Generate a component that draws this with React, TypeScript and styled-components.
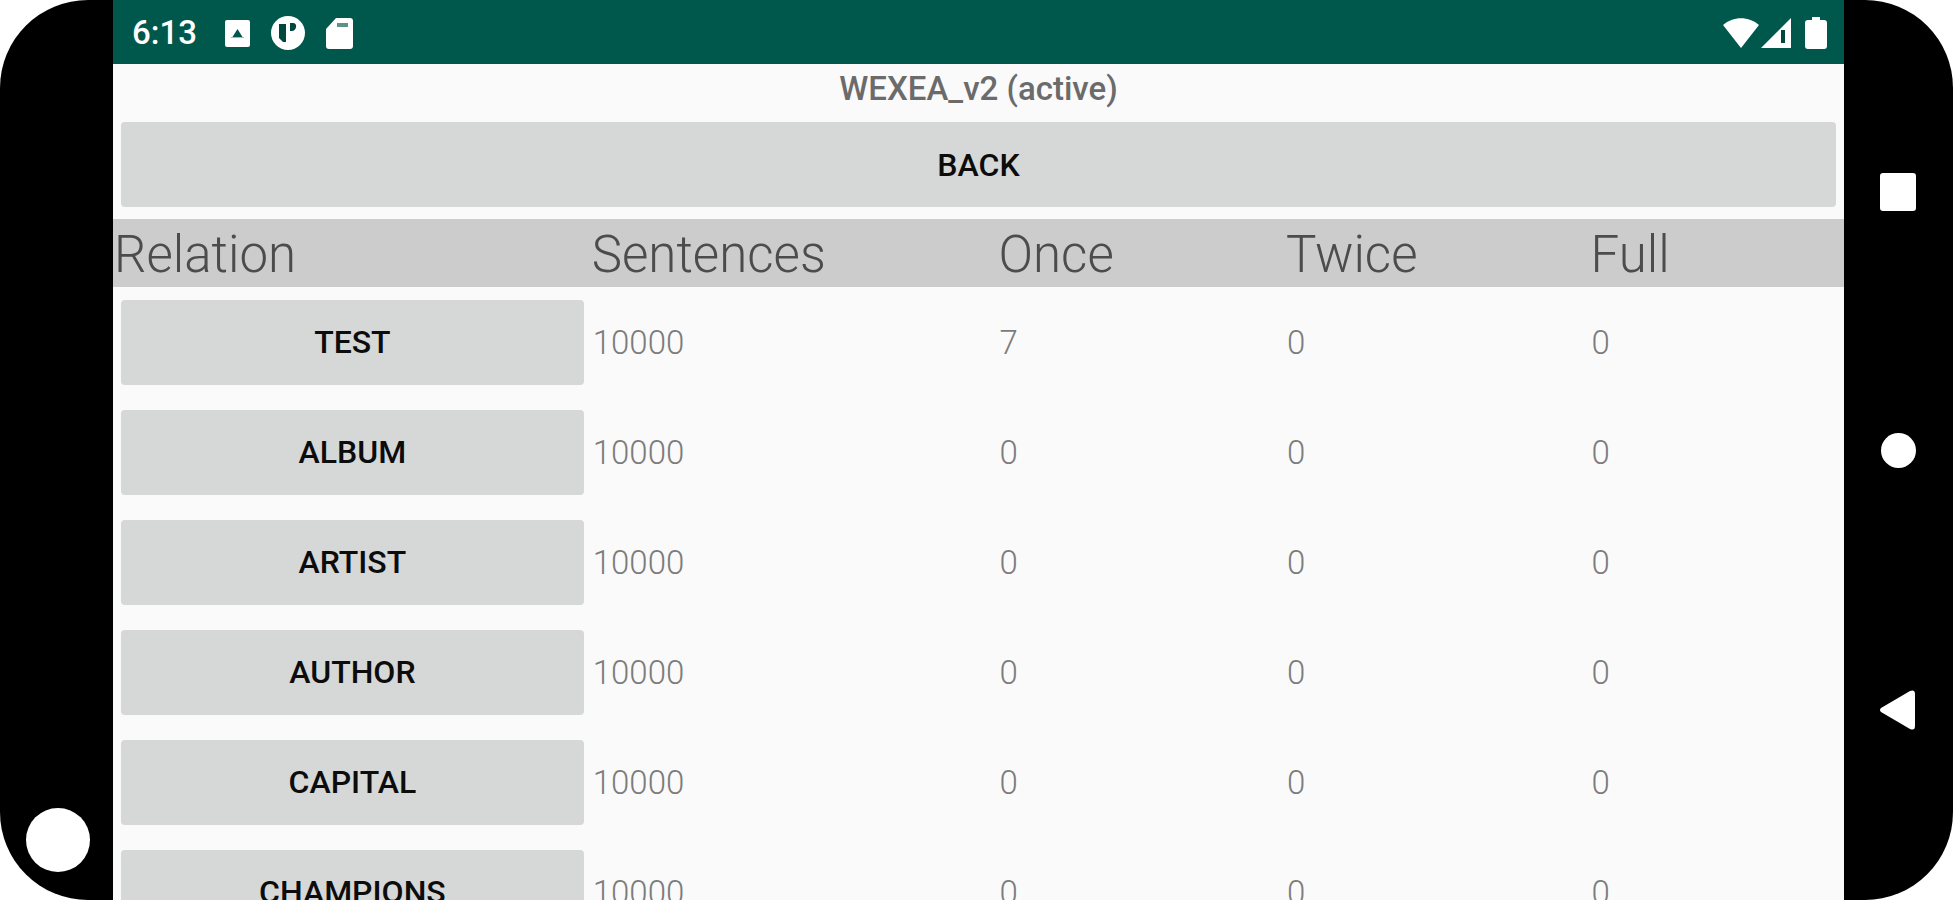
import React from "react";
import styled, { createGlobalStyle } from "styled-components";

const GlobalStyle = createGlobalStyle`
  *, *::before, *::after { box-sizing: border-box; }
  body {
    margin: 0;
    background: #ffffff;
    font-family: Roboto, "Liberation Sans", sans-serif;
  }
`;

const Device = styled.div`
  display: flex;
  height: 100vh;
  overflow: hidden;
  background: #000000;
  border-radius: 88px;
`;

const CameraBezel = styled.div`
  flex: 0 0 113px;
  display: flex;
  flex-direction: column;
  justify-content: flex-end;
  align-items: center;
  padding: 0 0 28px 3px;
`;

const Camera = styled.div`
  width: 64px;
  height: 64px;
  border-radius: 50%;
  background: #ffffff;
`;

const NavBezel = styled.nav`
  flex: 0 0 109px;
  display: flex;
  flex-direction: column;
  padding: 62px 1px 60px 0;
`;

const NavButton = styled.button`
  flex: 1;
  display: flex;
  align-items: center;
  justify-content: center;
  padding: 0;
  border: 0;
  background: transparent;
  color: #ffffff;
  cursor: pointer;
`;

const Screen = styled.div`
  flex: 1;
  min-width: 0;
  display: flex;
  flex-direction: column;
  overflow: hidden;
  background: #fafafa;
`;

const StatusBar = styled.header`
  flex: none;
  display: flex;
  align-items: center;
  justify-content: space-between;
  height: 64px;
  padding: 2px 17px 0 19px;
  background: #00574b;
  color: #ffffff;
`;

const StatusGroup = styled.div<{ $gap: number }>`
  display: flex;
  align-items: center;
  gap: ${(p) => p.$gap}px;
`;

const Clock = styled.time`
  margin-right: 7px;
  font-size: 33px;
  font-weight: 500;
  line-height: 40px;
`;

const Title = styled.h1`
  flex: none;
  margin: 0;
  padding: 5px 0;
  color: #6b6b6b;
  font-size: 33px;
  font-weight: 500;
  line-height: 40px;
  text-align: center;
`;

const BackArea = styled.div`
  flex: none;
  padding: 8px 8px 12px;
`;

const Button = styled.button`
  display: block;
  width: 100%;
  height: 85px;
  padding: 0;
  border: 0;
  border-radius: 4px;
  background: #d6d8d7;
  color: #0c0c0c;
  font-family: inherit;
  font-size: 32px;
  font-weight: 500;
  line-height: 40px;
  text-transform: uppercase;
  cursor: pointer;
`;

const RelationTable = styled.table`
  width: 100%;
  table-layout: fixed;
  border-collapse: collapse;
`;

const Column = styled.col<{ $width: string }>`
  width: ${(p) => p.$width};
`;

const HeadCell = styled.th`
  height: 68px;
  padding: 4px 0 0 1px;
  background: #cccccc;
  color: #4c4c4c;
  font-size: 51px;
  font-weight: 300;
  line-height: 60px;
  text-align: left;
`;

const NameCell = styled.td`
  height: 110px;
  padding: 0 7px 0 8px;
`;

const CountCell = styled.td`
  padding: 2px 0 0 2px;
  color: #7c7c7c;
  font-size: 33px;
  font-weight: 300;
  line-height: 40px;
`;

const relations = [
  { name: "Test", sentences: 10000, once: 7, twice: 0, full: 0 },
  { name: "Album", sentences: 10000, once: 0, twice: 0, full: 0 },
  { name: "Artist", sentences: 10000, once: 0, twice: 0, full: 0 },
  { name: "Author", sentences: 10000, once: 0, twice: 0, full: 0 },
  { name: "Capital", sentences: 10000, once: 0, twice: 0, full: 0 },
  { name: "Champions", sentences: 10000, once: 0, twice: 0, full: 0 },
];

const KeyboardIcon = () => (
  <svg width="25" height="27" viewBox="0 0 25 27" aria-hidden="true">
    <path
      fill="currentColor"
      fillRule="evenodd"
      d="M2 0h21a2 2 0 0 1 2 2v23a2 2 0 0 1-2 2H2a2 2 0 0 1-2-2V2a2 2 0 0 1 2-2Zm10.500 9-5 8h10Z"
    />
    <path fill="#9dbfba" d="M6 17h13v1H6Z" />
  </svg>
);

const AppIcon = () => (
  <svg width="34" height="34" viewBox="0 0 34 34" aria-hidden="true">
    <circle cx="17" cy="17" r="17" fill="currentColor" />
    <path fill="#00473d" d="M8 8h7v18h-3l-4-4ZM19 7h3a3 3 0 0 1 3 4c0 2-2 4-4 4h-2Z" />
  </svg>
);

const CardIcon = () => (
  <svg width="27" height="32" viewBox="0 0 27 32" aria-hidden="true">
    <path
      fill="currentColor"
      d="M10 1h14a3 3 0 0 1 3 3v25a3 3 0 0 1-3 3H3a3 3 0 0 1-3-3V12Z"
    />
    <path fill="#5d9189" d="M11 6h11v4H11Z" />
  </svg>
);

const WifiIcon = () => (
  <svg width="36" height="32" viewBox="0 0 36 32" aria-hidden="true">
    <path fill="currentColor" d="M0 8C10-1 26-1 36 8L18 31Z" />
  </svg>
);

const SignalIcon = () => (
  <svg width="30" height="30" viewBox="0 0 30 30" aria-hidden="true">
    <path fill="currentColor" d="M30 0v30H0Z" />
    <path fill="#00473d" d="M20 12h4v13h-4Z" />
  </svg>
);

const BatteryIcon = () => (
  <svg width="22" height="32" viewBox="0 0 22 32" aria-hidden="true">
    <path
      fill="currentColor"
      d="M7 0h8v3h4a3 3 0 0 1 3 3v23a3 3 0 0 1-3 3H3a3 3 0 0 1-3-3V6a3 3 0 0 1 3-3h4Z"
    />
  </svg>
);

const OverviewIcon = () => (
  <svg width="36" height="38" viewBox="0 0 36 38" aria-hidden="true">
    <rect width="36" height="38" rx="3" fill="currentColor" />
  </svg>
);

const HomeIcon = () => (
  <svg width="35" height="35" viewBox="0 0 35 35" aria-hidden="true">
    <circle cx="17.500" cy="17.500" r="17.500" fill="currentColor" />
  </svg>
);

const BackIcon = () => (
  <svg width="36" height="40" viewBox="0 0 36 40" aria-hidden="true">
    <path
      fill="currentColor"
      d="M1 18 30 1Q35-1 35 4v32q0 5-5 3L1 22Q-1 20 1 18Z"
    />
  </svg>
);

export default function App() {
  return (
    <>
      <GlobalStyle />
      <Device>
        <CameraBezel>
          <Camera />
        </CameraBezel>
        <Screen>
          <StatusBar>
            <StatusGroup $gap={21}>
              <Clock>6:13</Clock>
              <KeyboardIcon />
              <AppIcon />
              <CardIcon />
            </StatusGroup>
            <StatusGroup $gap={2}>
              <WifiIcon />
              <StatusGroup $gap={14}>
                <SignalIcon />
                <BatteryIcon />
              </StatusGroup>
            </StatusGroup>
          </StatusBar>
          <Title>WEXEA_v2 (active)</Title>
          <BackArea>
            <Button type="button">Back</Button>
          </BackArea>
          <RelationTable>
            <colgroup>
              <Column $width="27.6%" />
              <Column $width="23.5%" />
              <Column $width="16.6%" />
              <Column $width="17.6%" />
              <Column $width="14.7%" />
            </colgroup>
            <thead>
              <tr>
                <HeadCell scope="col">Relation</HeadCell>
                <HeadCell scope="col">Sentences</HeadCell>
                <HeadCell scope="col">Once</HeadCell>
                <HeadCell scope="col">Twice</HeadCell>
                <HeadCell scope="col">Full</HeadCell>
              </tr>
            </thead>
            <tbody>
              {relations.map((relation) => (
                <tr key={relation.name}>
                  <NameCell>
                    <Button type="button">{relation.name}</Button>
                  </NameCell>
                  <CountCell>{relation.sentences}</CountCell>
                  <CountCell>{relation.once}</CountCell>
                  <CountCell>{relation.twice}</CountCell>
                  <CountCell>{relation.full}</CountCell>
                </tr>
              ))}
            </tbody>
          </RelationTable>
        </Screen>
        <NavBezel aria-label="System navigation">
          <NavButton type="button" aria-label="Overview">
            <OverviewIcon />
          </NavButton>
          <NavButton type="button" aria-label="Home">
            <HomeIcon />
          </NavButton>
          <NavButton type="button" aria-label="Go back">
            <BackIcon />
          </NavButton>
        </NavBezel>
      </Device>
    </>
  );
}
